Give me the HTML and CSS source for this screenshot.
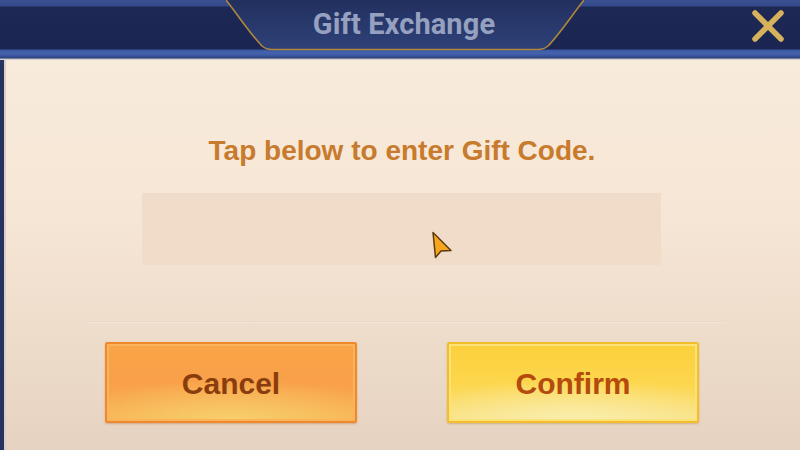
FILE: index.html
```html
<!DOCTYPE html>
<html lang="en">
<head>
<meta charset="utf-8">
<title>Gift Exchange</title>
<link rel="stylesheet" href="styles.css">
</head>
<body>
<div class="dialog">
  <header class="header">
    <div class="header-side"></div>
    <div class="tab">
      <svg class="tab-bg" width="358" height="51" viewBox="0 0 358 51" aria-hidden="true">
        <defs>
          <linearGradient id="tabfill" x1="0" y1="0" x2="0" y2="1">
            <stop offset="0" stop-color="#22305f"/>
            <stop offset="1" stop-color="#2e4178"/>
          </linearGradient>
        </defs>
        <path d="M0 0 C 14 18, 26 36, 36 46 Q 40 49.5, 46 49.5 L 312 49.5 Q 318 49.5, 322 46 C 332 36, 344 18, 358 0 Z" fill="url(#tabfill)"/>
        <path d="M0 0 C 14 18, 26 36, 36 46 Q 40 49.5, 46 49.5 L 312 49.5 Q 318 49.5, 322 46 C 332 36, 344 18, 358 0" fill="none" stroke="#b0873c" stroke-width="1.6"/>
      </svg>
      <h1 class="title">Gift Exchange</h1>
    </div>
    <div class="header-side header-right">
      <button class="close" aria-label="Close">
        <svg width="34" height="34" viewBox="0 0 34 34" aria-hidden="true">
          <path d="M4 4 L30 30 M30 4 L4 30" stroke="#d6b25c" stroke-width="5.5" stroke-linecap="round"/>
        </svg>
      </button>
    </div>
  </header>
  <main class="panel">
    <p class="prompt">Tap below to enter Gift Code.</p>
    <div class="code-box">
      <svg class="cursor" width="23" height="29" viewBox="0 0 23 29" aria-hidden="true">
        <path d="M2 1.5 L4.5 26.5 L10 20 L20 19.5 Z" fill="#f7a51c" stroke="#5b3b12" stroke-width="1.5" stroke-linejoin="round"/>
      </svg>
    </div>
    <div class="divider"></div>
    <div class="actions">
      <button class="btn btn-cancel">Cancel</button>
      <button class="btn btn-confirm">Confirm</button>
    </div>
  </main>
</div>
</body>
</html>
```
FILE: styles.css
```css
html, body {
  margin: 0;
  padding: 0;
  width: 800px;
  height: 450px;
  overflow: hidden;
  font-family: "Liberation Sans", Arial, sans-serif;
}

.dialog {
  width: 800px;
  height: 450px;
  display: flex;
  flex-direction: column;
  background: #1b2550;
}

.header {
  height: 60px;
  display: grid;
  grid-template-columns: 226px 358px 1fr;
  background:
    linear-gradient(to bottom,
      #3a5192 0px, #34498a 6px, #1d2854 7px, #1b2551 49px,
      #3b58a2 50px, #4663ad 53px, #3a55a0 56px, #2a3c78 58px, #c7c5c8 59px, #e8ddd3 60px);
}

.tab {
  position: relative;
  height: 51px;
  display: flex;
  justify-content: center;
  align-items: flex-start;
}

.tab-bg {
  position: absolute;
  left: 0;
  top: 0;
}

.title {
  position: relative;
  margin: 6px 0 0 -2px;
  font-family: Roboto, "Liberation Sans", sans-serif;
  font-weight: 700;
  font-size: 29px;
  line-height: 36px;
  color: #96a1c0;
  letter-spacing: 0.1px;
}

.header-right {
  display: flex;
  justify-content: flex-end;
  align-items: flex-start;
  padding-right: 15px;
}

.close {
  margin-top: 9px;
  padding: 0;
  border: none;
  background: none;
  width: 34px;
  height: 34px;
}

.panel {
  flex: 1;
  margin: 0;
  border-left: 4px solid #28325e;
  box-shadow: inset 2px 0 0 #d9cfc8;
  background: linear-gradient(to bottom, #f8ebdc 0%, #f6e6d5 40%, #eddbc9 75%, #e6d2c0 100%);
  display: flex;
  flex-direction: column;
  align-items: center;
}

.prompt {
  margin: 75px 0 0 0;
  font-size: 28px;
  line-height: 32px;
  font-weight: 700;
  color: #c87a2d;
  letter-spacing: 0;
}

.code-box {
  position: relative;
  margin: 26px 0 0 -1px;
  width: 519px;
  height: 72px;
  background: #f0dcc8;
}

.cursor {
  position: absolute;
  left: 289px;
  top: 38px;
}

.divider {
  margin-top: 56px;
  width: 640px;
  height: 2px;
  background: linear-gradient(to bottom, #e6d3c1, #f6e9dc);
  margin-left: 6px;
}

.actions {
  margin-top: 19px;
  display: flex;
  gap: 90px;
}

.btn {
  width: 252px;
  height: 81px;
  border-radius: 2px;
  font-family: "Liberation Sans", Arial, sans-serif;
  font-weight: 700;
  font-size: 30px;
  padding: 3px 0 0 0;
  cursor: pointer;
}

.btn-cancel {
  border: 2px solid #ee8a2c;
  color: #8a3d0c;
  background:
    radial-gradient(ellipse 70% 55% at 50% 100%, rgba(248, 214, 112, 0.85), rgba(248, 214, 112, 0) 100%),
    linear-gradient(to bottom, #f9a446 0%, #f9a04a 50%, #f7b153 100%);
  box-shadow: inset 0 0 0 2px #fbb35c, 0 1px 2px rgba(160, 90, 40, 0.35);
}

.btn-confirm {
  border: 2px solid #f3be2c;
  color: #b44a0e;
  background:
    radial-gradient(ellipse 70% 55% at 50% 100%, rgba(250, 240, 180, 0.9), rgba(250, 240, 180, 0) 100%),
    linear-gradient(to bottom, #fcd03c 0%, #fcd64c 50%, #f9e185 100%);
  box-shadow: inset 0 0 0 2px #fde179, 0 1px 2px rgba(160, 110, 40, 0.35);
}
```
